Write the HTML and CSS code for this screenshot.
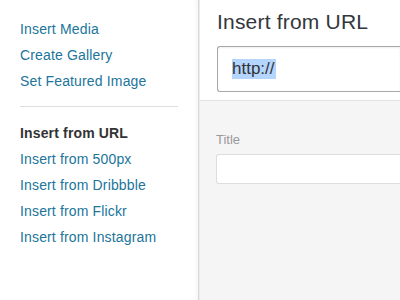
FILE: index.html
```html
<!DOCTYPE html>
<html>
<head>
<meta charset="utf-8">
<link rel="stylesheet" href="styles.css">
</head>
<body>
<div class="frame">
  <nav class="sidebar">
    <ul class="menu">
      <li><a class="link">Insert Media</a></li>
      <li><a class="link">Create Gallery</a></li>
      <li><a class="link">Set Featured Image</a></li>
    </ul>
    <div class="separator"></div>
    <ul class="menu">
      <li><span class="current">Insert from URL</span></li>
      <li><a class="link">Insert from 500px</a></li>
      <li><a class="link">Insert from Dribbble</a></li>
      <li><a class="link">Insert from Flickr</a></li>
      <li><a class="link">Insert from Instagram</a></li>
    </ul>
  </nav>
  <main class="content">
    <header class="head">
      <h1 class="title">Insert from URL</h1>
      <div class="url-input"><span class="selected">http://</span></div>
    </header>
    <section class="settings">
      <label class="label">Title</label>
      <div class="text-input"></div>
    </section>
  </main>
</div>
</body>
</html>
```
FILE: styles.css
```css
html, body {
  margin: 0;
  padding: 0;
  width: 400px;
  height: 300px;
  overflow: hidden;
  font-family: "Liberation Sans", Arial, sans-serif;
}
.frame {
  display: flex;
  height: 300px;
}
.sidebar {
  width: 158px;
  flex: none;
  padding: 16px 20px 0 20px;
  background: #fff;
  border-right: 1px solid #d8d8d8;
  box-shadow: 1px 0 0 #ececec, -4px 0 4px -2px rgba(0,0,0,0.04) inset;
  position: relative;
  z-index: 1;
}
.menu {
  list-style: none;
  margin: 0;
  padding: 0;
}
.menu li {
  font-size: 14px;
  line-height: 26px;
  white-space: nowrap;
  letter-spacing: 0.15px;
}
.link {
  color: #21759b;
  text-decoration: none;
}
.current {
  color: #333;
  font-weight: bold;
}
.separator {
  height: 1px;
  background: #dddddd;
  margin: 12px 0 13px 0;
}
.content {
  flex: 1;
  background: #f5f5f5;
  margin-left: 1px;
  display: flex;
  flex-direction: column;
  min-width: 0;
}
.head {
  background: #fff;
  padding: 10px 0 8px 17px;
  border-bottom: 1px solid #e2e2e2;
}
.title {
  margin: 0 0 12px 0;
  font-size: 21px;
  line-height: 24px;
  font-weight: normal;
  color: #32373c;
  white-space: nowrap;
  letter-spacing: 0.2px;
}
.url-input {
  height: 44px;
  border: 1px solid #a8a8a8;
  border-right: none;
  border-radius: 3px 0 0 3px;
  background: #fff;
  box-shadow: inset 0 1px 2px rgba(0,0,0,0.07);
  display: flex;
  align-items: center;
  padding-left: 14px;
  font-size: 17px;
  color: #333;
}
.selected {
  background: #b4d5fe;
  line-height: 20px;
  padding-right: 1px;
}
.settings {
  padding: 31px 0 0 16px;
  display: flex;
  flex-direction: column;
}
.label {
  font-size: 13px;
  line-height: 16px;
  color: #999;
  margin-bottom: 6px;
}
.text-input {
  height: 28px;
  background: #fff;
  border: 1px solid #dddddd;
  border-right: none;
  border-radius: 3px 0 0 3px;
}
```
